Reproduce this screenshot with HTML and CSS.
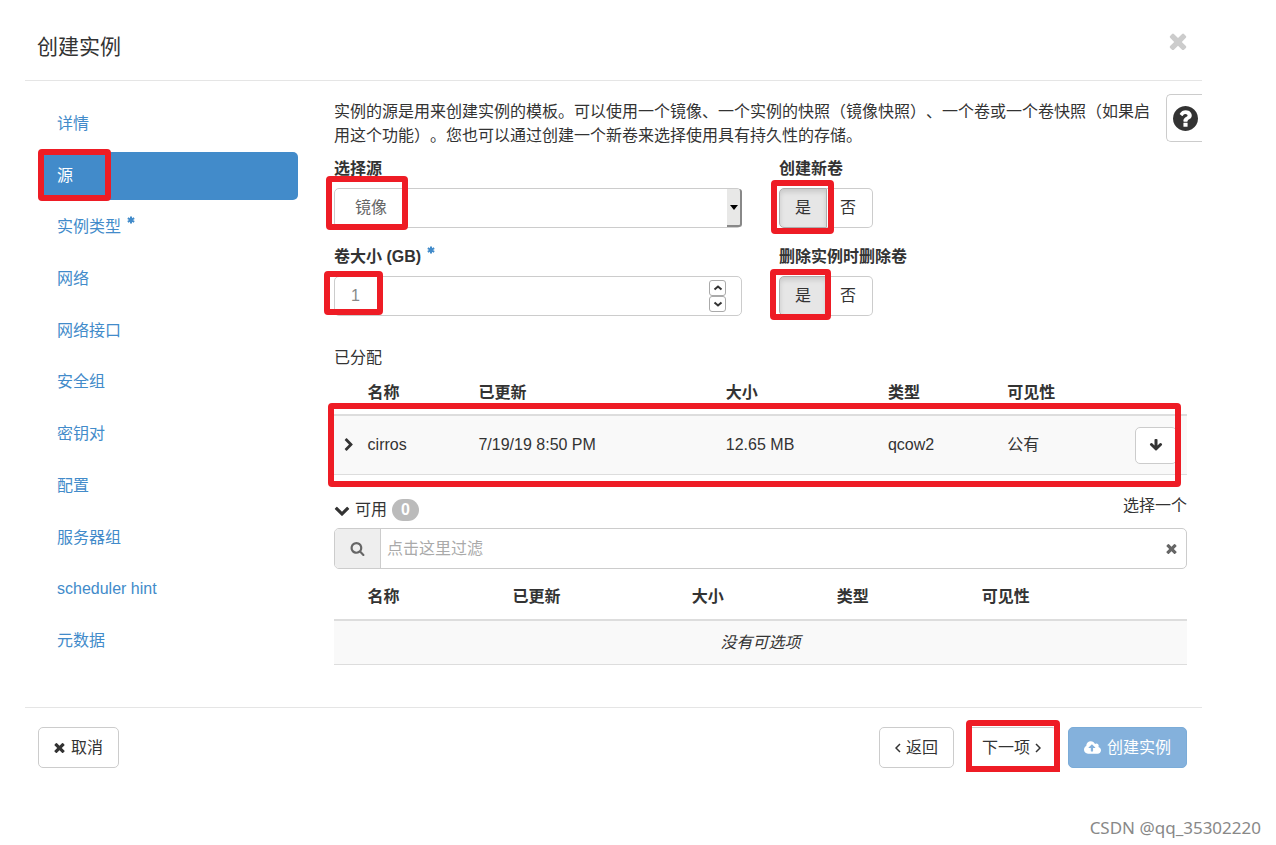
FILE: index.html
```html
<!DOCTYPE html>
<html lang="zh-CN">
<head>
<meta charset="utf-8">
<title>创建实例</title>
<link rel="stylesheet" href="styles.css">
</head>
<body>
<svg class="sprite" aria-hidden="true">
  <symbol id="times" viewBox="250 250 1292 1292"><path d="M1490 1322q0 40-28 68l-136 136q-28 28-68 28t-68-28l-294-294-294 294q-28 28-68 28t-68-28l-136-136q-28-28-28-68t28-68l294-294-294-294q-28-28-28-68t28-68l136-136q28-28 68-28t68 28l294 294 294-294q28-28 68-28t68 28l136 136q28 28 28 68t-28 68l-294 294 294 294q28 28 28 68z"/></symbol>
  <symbol id="question" viewBox="128 128 1536 1536"><path d="M1024 1376v-192q0-14-9-23t-23-9h-192q-14 0-23 9t-9 23v192q0 14 9 23t23 9h192q14 0 23-9t9-23zm256-672q0-88-55.500-163t-138.500-116-170.500-41q-243 0-371 213-15 24 8 42l132 100q7 6 19 6 16 0 25-12 53-68 86-92 34-24 86-24 48 0 85.500 26t37.500 59q0 38-20 61t-68 45q-63 28-115.500 86.500t-52.500 125.500v36q0 14 9 23t23 9h192q14 0 23-9t9-23q0-19 21.500-49.500t54.500-49.500q32-18 49-28.500t46-35 44.500-48 28-60.500 12.500-81zm384 192q0 209-103 385.500t-279.500 279.500-385.500 103-385.500-103-279.500-279.500-103-385.500 103-385.500 279.500-279.500 385.500-103 385.500 103 279.500 279.500 103 385.500z"/></symbol>
  <symbol id="search" viewBox="0 0 1792 1792"><path d="M1216 832q0-185-131.500-316.500t-316.500-131.500-316.500 131.500-131.500 316.500 131.500 316.500 316.500 131.500 316.500-131.500 131.500-316.500zm512 832q0 52-38 90t-90 38q-54 0-90-38l-343-342q-179 124-399 124-143 0-273.500-55.500t-225-150-150-225-55.500-273.500 55.500-273.500 150-225 225-150 273.500-55.500 273.500 55.500 225 150 150 225 55.500 273.500q0 220-124 399l343 343q37 37 37 90z"/></symbol>
  <symbol id="chevron-right" viewBox="0 0 1792 1792"><path d="M1363 877l-742 742q-19 19-45 19t-45-19l-166-166q-19-19-19-45t19-45l531-531-531-531q-19-19-19-45t19-45l166-166q19-19 45-19t45 19l742 742q19 19 19 45t-19 45z"/></symbol>
  <symbol id="chevron-down" viewBox="0 0 1792 1792"><path d="M1683 808l-742 741q-19 19-45 19t-45-19l-742-741q-19-19-19-45.500t19-45.500l166-165q19-19 45-19t45 19l531 531 531-531q19-19 45-19t45 19l166 165q19 19 19 45.500t-19 45.500z"/></symbol>
  <symbol id="arrow-down" viewBox="0 0 1792 1792"><path d="M1675 832q0 53-37 90l-651 652q-39 37-91 37-53 0-90-37l-651-652q-38-36-38-90 0-53 38-91l74-75q39-37 91-37 53 0 90 37l294 294v-704q0-52 38-90t90-38h128q52 0 90 38t38 90v704l294-294q37-37 90-37 52 0 91 37l75 75q37 39 37 91z"/></symbol>
  <symbol id="cloud" viewBox="0 0 1920 1792"><path d="M1280 864q0-14-9-23l-352-352q-9-9-23-9t-23 9l-351 351q-10 12-10 24 0 14 9 23t23 9h224v352q0 13 9.500 22.500t22.500 9.500h192q13 0 22.500-9.500t9.500-22.500v-352h224q13 0 22.500-9.500t9.500-22.500zm640 288q0 159-112.500 271.500t-271.500 112.500h-1088q-185 0-316.500-131.500t-131.500-316.500q0-130 70-240t188-165q-2-30-2-43 0-212 150-362t362-150q156 0 285.500 87t188.500 231q71-62 166-62 106 0 181 75t75 181q0 76-41 138 130 31 213.500 135.500t83.500 238.500z"/></symbol>
  <symbol id="angle-left" viewBox="0 0 6 10"><path class="line" d="M5 1 1 5l4 4"/></symbol>
  <symbol id="angle-right" viewBox="0 0 6 10"><path class="line" d="m1 1 4 4-4 4"/></symbol>
  <symbol id="asterisk" viewBox="0 0 8 8"><path class="thick" d="M4 .500v7M.800 2.200l6.400 3.600M7.200 2.200.800 5.800"/></symbol>
  <symbol id="spin-up" viewBox="0 0 10 6"><path class="thick" d="m1.500 4.500 3.500-3 3.500 3"/></symbol>
  <symbol id="spin-down" viewBox="0 0 10 6"><path class="thick" d="m1.500 1.500 3.500 3 3.500-3"/></symbol>
</svg>

<div class="modal" role="dialog" aria-labelledby="title">
  <header class="modal-header">
    <h1 id="title" class="title">创建实例</h1>
    <button class="close" type="button" aria-label="关闭"><svg><use href="#times"/></svg></button>
  </header>

  <div class="modal-body">
    <nav class="steps">
      <a class="step" href="#">详情</a>
      <a class="step active" href="#">源<span class="mark mark-step"></span></a>
      <a class="step" href="#">实例类型<svg class="required"><use href="#asterisk"/></svg></a>
      <a class="step" href="#">网络</a>
      <a class="step" href="#">网络接口</a>
      <a class="step" href="#">安全组</a>
      <a class="step" href="#">密钥对</a>
      <a class="step" href="#">配置</a>
      <a class="step" href="#">服务器组</a>
      <a class="step" href="#">scheduler hint</a>
      <a class="step" href="#">元数据</a>
    </nav>

    <main class="content">
      <button class="help" type="button" aria-label="帮助"><svg><use href="#question"/></svg></button>
      <p class="intro">实例的源是用来创建实例的模板。可以使用一个镜像、一个实例的快照（镜像快照）、一个卷或一个卷快照（如果启用这个功能）。您也可以通过创建一个新卷来选择使用具有持久性的存储。</p>

      <form class="form">
        <div class="field">
          <label class="label" for="source">选择源</label>
          <div class="control">
            <select id="source" class="input"><option>镜像</option></select>
            <span class="select-arrow"></span>
            <span class="mark mark-select"></span>
          </div>
        </div>
        <div class="field">
          <span class="label" id="new-volume">创建新卷</span>
          <div class="toggle" role="group" aria-labelledby="new-volume">
            <button class="btn pressed" type="button" aria-pressed="true">是</button>
            <button class="btn" type="button" aria-pressed="false">否</button>
            <span class="mark mark-create"></span>
          </div>
        </div>
        <div class="field">
          <label class="label" for="size">卷大小 (GB)<svg class="required"><use href="#asterisk"/></svg></label>
          <div class="control">
            <input id="size" class="input" type="number" value="1">
            <span class="spinner">
              <button class="spin" type="button" aria-label="增加"><svg><use href="#spin-up"/></svg></button>
              <button class="spin" type="button" aria-label="减少"><svg><use href="#spin-down"/></svg></button>
            </span>
            <span class="mark mark-size"></span>
          </div>
        </div>
        <div class="field">
          <span class="label" id="delete-volume">删除实例时删除卷</span>
          <div class="toggle" role="group" aria-labelledby="delete-volume">
            <button class="btn pressed" type="button" aria-pressed="true">是</button>
            <button class="btn" type="button" aria-pressed="false">否</button>
            <span class="mark mark-delete"></span>
          </div>
        </div>
      </form>

      <h2 class="section">已分配</h2>
      <div class="allocated">
        <table class="table">
          <colgroup><col class="w-caret"><col class="a-name"><col class="a-date"><col class="a-size"><col class="a-type"><col class="a-vis"><col></colgroup>
          <thead><tr><th></th><th>名称</th><th>已更新</th><th>大小</th><th>类型</th><th>可见性</th><th></th></tr></thead>
          <tbody><tr>
            <td class="caret"><svg><use href="#chevron-right"/></svg></td>
            <td>cirros</td><td>7/19/19 8:50 PM</td><td>12.65 MB</td><td>qcow2</td><td>公有</td>
            <td><button class="btn btn-move" type="button" aria-label="移除"><svg><use href="#arrow-down"/></svg></button></td>
          </tr></tbody>
        </table>
        <span class="mark mark-row"></span>
      </div>

      <div class="available">
        <h2 class="section available-title"><svg><use href="#chevron-down"/></svg>可用<span class="badge">0</span></h2>
        <span class="hint">选择一个</span>
      </div>
      <div class="search">
        <span class="search-icon"><svg><use href="#search"/></svg></span>
        <input class="search-input" type="text" placeholder="点击这里过滤" aria-label="过滤">
        <button class="clear" type="button" aria-label="清除"><svg><use href="#times"/></svg></button>
      </div>
      <table class="table table-empty">
        <colgroup><col class="w-caret"><col class="b-col"><col class="b-date"><col class="b-col"><col class="b-col"><col></colgroup>
        <thead><tr><th></th><th>名称</th><th>已更新</th><th>大小</th><th>类型</th><th>可见性</th></tr></thead>
        <tbody><tr><td class="empty" colspan="6">没有可选项</td></tr></tbody>
      </table>
    </main>
  </div>

  <footer class="modal-footer">
    <button class="btn btn-cancel" type="button"><svg class="i-times"><use href="#times"/></svg>取消</button>
    <button class="btn" type="button"><svg class="i-angle"><use href="#angle-left"/></svg>返回</button>
    <span class="next">
      <button class="btn" type="button">下一项<svg class="i-angle"><use href="#angle-right"/></svg></button>
      <span class="mark mark-next"></span>
    </span>
    <button class="btn btn-primary" type="button" disabled><svg class="i-cloud"><use href="#cloud"/></svg>创建实例</button>
  </footer>
</div>
<div class="watermark">CSDN @qq_35302220</div>
</body>
</html>
```
FILE: styles.css
```css
* { box-sizing: border-box; }

body {
  margin: 0;
  background: #fff;
  color: #333;
  font: 16px/24px "Liberation Sans", "Noto Sans CJK SC", sans-serif;
  text-spacing-trim: space-all;
}

button, input, select { font: inherit; color: inherit; }
button { padding: 0; border: 0; background: none; }
svg { fill: currentColor; display: block; flex: none; }
.sprite { position: absolute; width: 0; height: 0; }
.line, .thick { fill: none; stroke: currentColor; stroke-width: 1.5; }
.thick { stroke-width: 2; }

.modal { margin: 0 74px 0 25px; }

.modal-header {
  display: flex;
  justify-content: space-between;
  align-items: flex-start;
  padding: 32px 15px 18px 12px;
  border-bottom: 1px solid #e5e5e5;
}
.title { margin: 0; font-size: 21px; line-height: 30px; font-weight: 400; }
.close { color: #ccc; }
.close svg { width: 18px; height: 18px; }

.modal-body {
  display: grid;
  grid-template-columns: 260px 1fr;
  gap: 36px;
  padding: 19px 15px 42px 13px;
}

.steps { display: grid; align-content: space-between; }
.step {
  position: relative;
  display: flex;
  height: 48px;
  padding: 12px 19px;
  border-radius: 5px;
  color: #428bca;
  text-decoration: none;
}
.step.active { background: #428bca; color: #fff; }
.required { width: 8px; height: 8px; margin: 1px 0 0 6px; color: #428bca; }

.content { position: relative; min-width: 0; }
.help {
  position: absolute;
  top: -6px;
  right: -15px;
  width: 36px;
  height: 48px;
  padding: 0 0 0 6px;
  border: 1px solid #ccc;
  border-right: 0;
  border-radius: 5px 0 0 5px;
}
.help svg { width: 25px; height: 25px; }
.intro { margin: 0 30px 9px 0; }

.form { display: grid; grid-template-columns: 1fr 1fr; gap: 17px 37px; }
.field { display: flex; flex-direction: column; gap: 7px; }
.label { display: flex; font-weight: 700; }
.control { position: relative; }
.input {
  display: block;
  width: 100%;
  height: 40px;
  padding: 0 20px;
  border: 1px solid #ccc;
  border-radius: 5px;
  background: #fff;
  color: #666;
  appearance: none;
}
input.input { padding: 0 16px; color: #888; appearance: textfield; }
.input::-webkit-inner-spin-button { display: none; }
.select-arrow {
  position: absolute;
  top: 1px;
  right: 0;
  bottom: 1px;
  width: 15px;
  display: grid;
  place-items: center;
  border: solid #888;
  border-width: 0 2px 2px 0;
  border-radius: 0 3px 3px 0;
  background: #e8e8e7;
  pointer-events: none;
}
.select-arrow::before {
  content: "";
  border: 4px solid transparent;
  border-top: 5px solid #000;
  border-bottom: 0;
}
.spinner { position: absolute; top: 4px; right: 16px; display: grid; }
.spin {
  display: grid;
  place-items: center;
  width: 17px;
  height: 16px;
  border: 1px solid #aaa;
  border-radius: 3px;
  background: #fff;
}
.spin svg { width: 10px; height: 6px; }

.btn {
  display: inline-flex;
  align-items: center;
  justify-content: center;
  height: 41px;
  padding: 0 15px;
  border: 1px solid #ccc;
  border-radius: 5px;
  background: #fff;
}
.toggle { position: relative; display: flex; width: max-content; height: 40px; }
.toggle .btn { height: 40px; padding: 0 16px 0 13px; border-radius: 0 5px 5px 0; border-left: 0; }
.toggle .pressed {
  padding: 0 15px;
  border: 1px solid #adadad;
  border-radius: 5px 0 0 5px;
  background: #e6e6e6;
  box-shadow: inset 0 3px 5px rgba(0, 0, 0, .125);
}

.section { margin: 30px 0 6px; font-size: 16px; font-weight: 400; }
.allocated { position: relative; }
.table { width: 100%; table-layout: fixed; border-collapse: separate; border-spacing: 0; }
.table th { height: 40px; padding: 0 8px 4px; border-bottom: 2px solid #ddd; text-align: left; }
.table td { height: 59px; padding: 0 8px; border-bottom: 1px solid #ddd; background: #f9f9f9; }
.w-caret { width: 3%; }
.a-name { width: 13%; }
.a-date { width: 29%; }
.a-size { width: 19%; }
.a-type { width: 14%; }
.a-vis { width: 15%; }
.b-col { width: 17%; }
.b-date { width: 21%; }
.caret svg { width: 14px; height: 16px; }
.btn-move { width: 42px; height: 37px; padding: 0; vertical-align: middle; }
.btn-move svg { width: 14px; height: 14px; }

.available { display: flex; justify-content: space-between; margin-top: 19px; padding-bottom: 6px; }
.available-title { display: flex; align-items: center; gap: 5px; margin: 4px 0 0; }
.available-title svg { width: 16px; height: 16px; }
.badge {
  padding: 0 9px;
  border-radius: 12px;
  background: #bbb;
  color: #fff;
  font-weight: 700;
  line-height: 22px;
}
.search { display: flex; height: 41px; border: 1px solid #ccc; border-radius: 5px; overflow: hidden; }
.search-icon {
  display: grid;
  place-items: center;
  width: 46px;
  border-right: 1px solid #ccc;
  background: #eee;
  color: #666;
}
.search-icon svg { width: 15px; height: 15px; }
.search-input { flex: 1; min-width: 0; padding: 0 6px; border: 0; outline: 0; }
.search-input::placeholder { color: #aaa; }
.clear { width: 28px; color: #666; }
.clear svg, .i-times { width: 11px; height: 11px; }
.clear svg { margin: 0 8px; }
.table-empty { margin-top: 5px; }
.table-empty th { height: 47px; padding: 0 8px; }
.table-empty td { height: 44px; }
.table-empty .empty { text-align: center; font-style: italic; }

.modal-footer {
  display: flex;
  padding: 19px 15px 20px 13px;
  border-top: 1px solid #e5e5e5;
}
.i-times { margin-right: 6px; }
.i-cloud { width: 17px; height: 16px; margin-right: 6px; }
.i-angle { width: 6px; height: 10px; margin: 0 5px 0 0; }
.next .i-angle { margin: 0 0 0 5px; }
.btn-cancel { margin-right: auto; }
.next { position: relative; display: flex; margin: 0 11px 0 12px; }
.btn-primary { border-color: #7bacd8; background: #84b1dc; color: #fff; }

/* Highlight frames laid over the controls */
.mark {
  position: absolute;
  border: 6px solid #ee1c25;
  border-radius: 4px;
  pointer-events: none;
}
.mark-step { top: -3px; left: 0; width: 73px; height: 52px; }
.mark-select { top: -12px; left: -8px; width: 82px; height: 54px; }
.mark-size { top: -5px; left: -10px; width: 59px; height: 44px; }
.mark-create { top: -8px; left: -8px; width: 63px; height: 54px; }
.mark-delete { top: -7px; left: -9px; width: 61px; height: 51px; }
.mark-row { top: 27px; right: 6px; bottom: -12px; left: -6px; }
.mark-next { top: -7px; right: -3px; bottom: -4px; left: 0; border-radius: 4px 4px 0 0; }

.watermark {
  padding: 28px 15px 6px;
  color: #888;
  font-family: "Noto Sans", sans-serif;
  font-size: 17px;
  text-align: right;
}
```
